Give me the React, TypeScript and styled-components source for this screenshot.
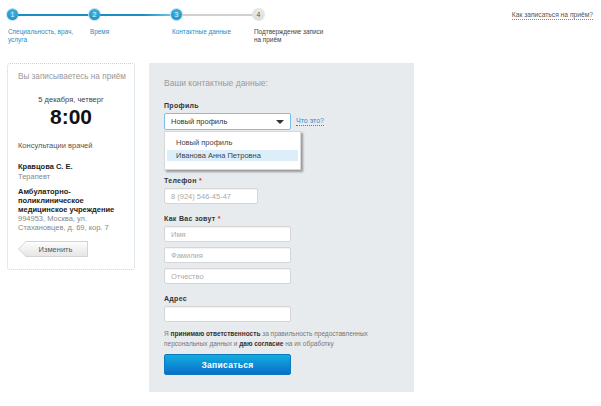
import styled, { createGlobalStyle } from 'styled-components';

const GlobalStyle = createGlobalStyle`
  html, body {
    margin: 0;
    padding: 0;
    background: #fff;
    font-family: 'Liberation Sans', Arial, sans-serif;
    color: #333;
  }
`;

const steps = [
  { num: 1, label: 'Специальность, врач, услуга', done: true },
  { num: 2, label: 'Время', done: true },
  { num: 3, label: 'Контактные данные', done: true },
  { num: 4, label: 'Подтверждение записи на приём', done: false },
];

const App = () => {
  return (
    <Page>
      <GlobalStyle />
      <Header>
        <Steps>
          {steps.map((step, i) => (
            <Step key={step.num}>
              <StepTrack>
                <Circle $active={step.done}>{step.num}</Circle>
                {i < steps.length - 1 && (
                  <Connector $active={steps[i + 1].done} $fade={i === 1} />
                )}
              </StepTrack>
              <StepLabel $active={step.done}>{step.label}</StepLabel>
            </Step>
          ))}
        </Steps>
        <HelpLink>Как записаться на приём?</HelpLink>
      </Header>

      <Main>
        <Summary>
          <SummaryTitle>Вы записываетесь на приём</SummaryTitle>
          <DateText>5 декабря, четверг</DateText>
          <TimeText>8:00</TimeText>
          <Service>Консультации врачей</Service>
          <Doctor>
            <b>Кравцова С. Е.</b>
            <span>Терапевт</span>
          </Doctor>
          <Clinic>
            <b>Амбулаторно-поликлиническое медицинское учреждение</b>
            <span>994953, Москва, ул. Стахановцев, д. 69, кор. 7</span>
          </Clinic>
          <BackButton>
            <BackButtonFace>Изменить</BackButtonFace>
          </BackButton>
        </Summary>

        <Form>
          <FormTitle>Ваши контактные данные:</FormTitle>

          <ProfileField>
            <Label>Профиль</Label>
            <SelectRow>
              <Select>
                <span>Новый профиль</span>
                <Caret />
              </Select>
              <HintLink>Что это?</HintLink>
            </SelectRow>
            <Dropdown>
              <Option>Новый профиль</Option>
              <Option $selected>Иванова Анна Петровна</Option>
            </Dropdown>
          </ProfileField>

          <Field $gap={46}>
            <Label>
              Телефон <Req>*</Req>
            </Label>
            <Input $width={94} placeholder="8 (924) 546-45-47" />
          </Field>

          <Field $gap={10}>
            <Label>
              Как Вас зовут <Req>*</Req>
            </Label>
            <InputStack>
              <Input placeholder="Имя" />
              <Input placeholder="Фамилия" />
              <Input placeholder="Отчество" />
            </InputStack>
          </Field>

          <Field $gap={10}>
            <Label>Адрес</Label>
            <Input />
          </Field>

          <Consent>
            <ConsentLine>
              Я <b>принимаю ответственность</b> за правильность предоставленных
            </ConsentLine>
            <ConsentLine>
              персональных данных и <b>даю согласие</b> на их обработку
            </ConsentLine>
          </Consent>

          <Submit>Записаться</Submit>
        </Form>
      </Main>
    </Page>
  );
};

const Page = styled.div`
  width: 601px;
  min-height: 406px;
`;

const Header = styled.div`
  display: flex;
  justify-content: space-between;
  align-items: flex-start;
  padding: 8px 8px 0 7px;
  height: 55px;
`;

const Steps = styled.ol`
  display: flex;
  margin: 0;
  padding: 0;
  list-style: none;
`;

const Step = styled.li`
  width: 82px;
  display: flex;
  flex-direction: column;
`;

const StepTrack = styled.div`
  display: flex;
  align-items: center;
  height: 13px;
`;

const Circle = styled.span<{ $active: boolean }>`
  flex: none;
  width: 11px;
  height: 11px;
  border-radius: 50%;
  display: flex;
  align-items: center;
  justify-content: center;
  font-size: 7px;
  line-height: 1;
  color: ${(p) => (p.$active ? '#e6f5fc' : '#555')};
  background: ${(p) =>
    p.$active
      ? 'radial-gradient(circle at 50% 35%, #41b6e3, #1789c0)'
      : 'radial-gradient(circle at 50% 35%, #eee, #d4d4d4)'};
  box-shadow: 0 0 0 1px ${(p) => (p.$active ? '#b9e0f1' : '#e4e4e4')};
`;

const Connector = styled.span<{ $active: boolean; $fade: boolean }>`
  flex: 1;
  height: 2px;
  background: ${(p) =>
    p.$active
      ? p.$fade
        ? 'linear-gradient(to right, #1c8dc3 60%, #6cc3e6)'
        : '#1c8dc3'
      : '#d0d0d0'};
`;

const StepLabel = styled.span<{ $active: boolean }>`
  margin-top: 7px;
  padding-left: 1px;
  width: 72px;
  font-size: 6.4px;
  line-height: 8px;
  color: ${(p) => (p.$active ? '#2b8dc4' : '#444')};
`;

const HelpLink = styled.span`
  margin-top: 2px;
  font-size: 6.7px;
  color: #555;
  border-bottom: 1px dotted #888;
  line-height: 9px;
`;

const Main = styled.div`
  display: flex;
  align-items: flex-start;
  gap: 14px;
  padding-left: 7px;
`;

const Summary = styled.aside`
  width: 106px;
  padding: 7px 10px 12px;
  border: 1px dotted #c5d3de;
  border-radius: 3px;
`;

const SummaryTitle = styled.div`
  font-size: 8.2px;
  line-height: 12px;
  color: #999;
  white-space: nowrap;
`;

const DateText = styled.div`
  margin-top: 12px;
  text-align: center;
  font-size: 7.5px;
  line-height: 10px;
  color: #444;
`;

const TimeText = styled.div`
  margin-top: 1px;
  text-align: center;
  font-size: 21px;
  font-weight: bold;
  line-height: 22px;
  color: #111;
`;

const Service = styled.div`
  margin-top: 13px;
  font-size: 7.5px;
  line-height: 10px;
  color: #555;
`;

const Doctor = styled.div`
  margin-top: 11px;
  display: flex;
  flex-direction: column;
  font-size: 7.5px;
  line-height: 10px;
  color: #888;

  b {
    color: #222;
  }
`;

const Clinic = styled.div`
  margin-top: 5px;
  display: flex;
  flex-direction: column;
  font-size: 7.5px;
  line-height: 9px;
  color: #888;

  b {
    color: #222;
  }
`;

const BackButton = styled.div`
  margin-top: 9px;
  width: 70px;
  height: 16px;
  padding: 1px;
  box-sizing: border-box;
  background: #d4d4d4;
  clip-path: polygon(8px 0, 100% 0, 100% 100%, 8px 100%, 0 50%);
`;

const BackButtonFace = styled.div`
  height: 100%;
  display: flex;
  align-items: center;
  justify-content: center;
  padding-left: 5px;
  font-size: 7.5px;
  color: #555;
  background: linear-gradient(#fdfdfd, #e6e6e6);
  clip-path: polygon(7px 0, 100% 0, 100% 100%, 7px 100%, 0 50%);
`;

const Form = styled.section`
  width: 250px;
  padding: 15px 0 17px 15px;
  background: #e8ebee;
  display: flex;
  flex-direction: column;
  align-items: flex-start;
`;

const FormTitle = styled.div`
  font-size: 8.5px;
  line-height: 11px;
  color: #999;
`;

const Label = styled.div`
  font-size: 7px;
  font-weight: bold;
  line-height: 10px;
  letter-spacing: 0.3px;
  color: #333;
  margin-bottom: 2px;
`;

const Req = styled.span`
  color: #e03030;
`;

const ProfileField = styled.div`
  position: relative;
  margin-top: 12px;
`;

const SelectRow = styled.div`
  display: flex;
  align-items: center;
  gap: 5px;
`;

const Select = styled.div`
  box-sizing: border-box;
  width: 127px;
  height: 17px;
  padding: 0 6px;
  display: flex;
  align-items: center;
  justify-content: space-between;
  background: #fff;
  border: 1px solid #7cc0e8;
  border-radius: 2px;
  font-size: 7.5px;
  color: #333;
`;

const Caret = styled.span`
  width: 0;
  height: 0;
  border-left: 4px solid transparent;
  border-right: 4px solid transparent;
  border-top: 4px solid #333;
`;

const HintLink = styled.span`
  font-size: 7px;
  color: #2b8dc4;
  border-bottom: 1px dotted #2b8dc4;
  line-height: 8px;
`;

const Dropdown = styled.div`
  position: absolute;
  left: 0;
  top: 30px;
  box-sizing: border-box;
  width: 137px;
  height: 39px;
  padding: 5px 2px;
  background: #fff;
  border: 1px solid #d8d8d8;
  box-shadow: 2px 2px 2px rgba(0, 0, 0, 0.35);
  z-index: 2;
`;

const Option = styled.div<{ $selected?: boolean }>`
  height: 11px;
  line-height: 11px;
  padding-left: 9px;
  margin-bottom: 2px;
  font-size: 7.5px;
  color: #444;
  background: ${(p) => (p.$selected ? '#dbeefa' : 'transparent')};
`;

const Field = styled.div<{ $gap: number }>`
  margin-top: ${(p) => p.$gap}px;
`;

const InputStack = styled.div`
  display: flex;
  flex-direction: column;
  gap: 5px;
`;

const Input = styled.input<{ $width?: number }>`
  display: block;
  box-sizing: border-box;
  width: ${(p) => p.$width ?? 127}px;
  height: 16px;
  margin: 0;
  padding: 0 6px;
  background: #fff;
  border: 1px solid #d6d6d6;
  border-radius: 2px;
  box-shadow: inset 0 1px 1px rgba(0, 0, 0, 0.05);
  font-family: 'Liberation Sans', Arial, sans-serif;
  font-size: 7.5px;
  color: #333;
  outline: none;

  &::placeholder {
    color: #aaa;
  }
`;

const Consent = styled.div`
  margin-top: 7px;
  font-size: 6.5px;
  line-height: 10px;
  color: #777;

  b {
    color: #333;
  }
`;

const ConsentLine = styled.div`
  white-space: nowrap;
`;

const Submit = styled.button`
  display: block;
  margin-top: 5px;
  width: 127px;
  height: 21px;
  border: 1px solid #0b78c0;
  border-radius: 2px;
  background: linear-gradient(#10aede, #0b6ecb);
  color: #fff;
  font-family: 'Liberation Sans', Arial, sans-serif;
  font-size: 8.5px;
  font-weight: bold;
  letter-spacing: 0.3px;
  cursor: pointer;
`;

export default App;
